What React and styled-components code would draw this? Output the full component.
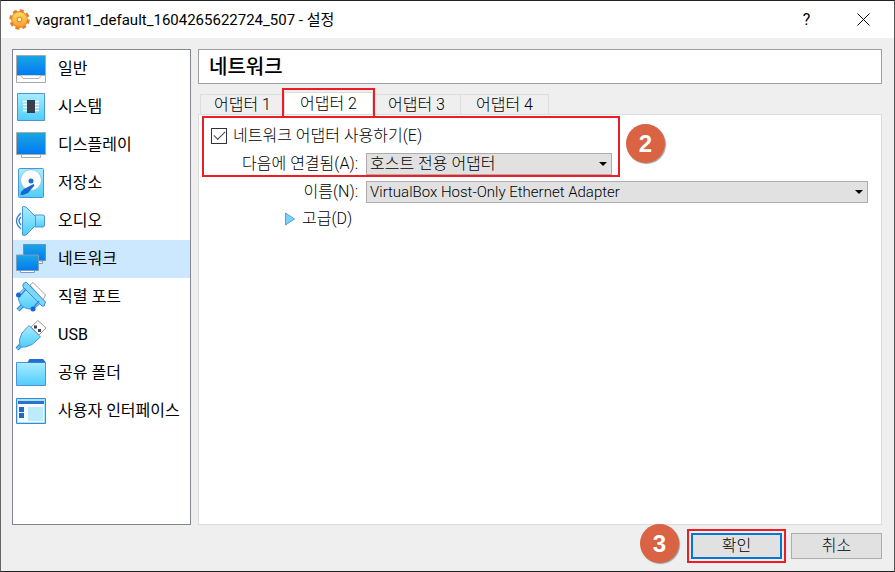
import React from "react";
import styled, { createGlobalStyle, css } from "styled-components";

const colors = {
	face: "#efefef",
	control: "#e1e1e1",
	line: "#dcdcdc",
	outline: "#adadad",
	mark: "#ee1c25",
	badge: "#d96343",
	focus: "#0078d7",
	selected: "#cce8ff",
};

const fonts = {
	system: `Roboto, "Noto Sans CJK KR", sans-serif`,
	form: `Roboto, "Noto Sans CJK KR", sans-serif`,
	badge: `"Liberation Sans", sans-serif`,
};

// --------------------------------------------------

const sections = [
	{ name: "일반", icon: "general", },
	{ name: "시스템", icon: "system", },
	{ name: "디스플레이", icon: "display", },
	{ name: "저장소", icon: "storage", },
	{ name: "오디오", icon: "audio", },
	{ name: "네트워크", icon: "network", },
	{ name: "직렬 포트", icon: "serial", },
	{ name: "USB", icon: "usb", },
	{ name: "공유 폴더", icon: "folder", },
	{ name: "사용자 인터페이스", icon: "ui", },
];

const adapters = [ "어댑터 1", "어댑터 2", "어댑터 3", "어댑터 4", ];

// --------------------------------------------------

const drawings = {
	general: (
		<>
			<path d="M1.5 20.5H30.5V29.5H1.5Z" fill="#fff" stroke="#a9a9a9" />
			<path d="M1.5 2.5H30.5V22.5H1.5Z" fill="url(#screen)" stroke="#a9a9a9" />
			<path d="M2 22.5H6L8 25.5H24L26 22.5H30" fill="#fff" stroke="#b5b5b5" />
		</>
	),
	system: (
		<>
			<path d="M2.5 2.5H29.5V29.5H2.5Z" fill="url(#glass)" stroke="#4b94dc" />
			<path
				d="M8 10.5H24M8 13.5H24M8 16.5H24M8 19.500H24"
				stroke="#fff"
				strokeWidth="1.500"
			/>
			<path d="M12 9H20V22H12Z" fill="#3b3f4c" />
		</>
	),
	display: (
		<>
			<path d="M6.5 24H25.5V28.5H6.5Z" fill="#fff" stroke="#a9a9a9" />
			<path d="M1.5 3.5H30.5V25.5H1.5Z" fill="url(#screen)" stroke="#a9a9a9" />
		</>
	),
	storage: (
		<>
			<rect
				x="3.5"
				y="1.5"
				width="25"
				height="29"
				rx="1"
				fill="url(#glass)"
				stroke="#4b94dc"
			/>
			<circle cx="16" cy="13" r="10.5" fill="#fff" stroke="#8fc8ef" />
			<circle cx="16" cy="14" r="2.5" fill="#1b6fd0" />
			<path d="M18.5 17L19.5 18.5L13 26L8 28H5.5L6 25L9 22Z" fill="#1668cf" />
		</>
	),
	audio: (
		<>
			<path
				d="M6 8Q-3 16 6 24M6 12Q2 16 6 20"
				fill="none"
				stroke="#2f7fd6"
				strokeWidth="1.3"
			/>
			<path
				d="M20 10H28Q29.500 10 29.500 12V20Q29.500 22 28 22H20Z"
				fill="url(#glass)"
				stroke="#4b94dc"
			/>
			<path
				d="M7.5 2Q7.5 1.5 9 1.5L11 2L20.5 11.5V20.5L11 30L9 30.5L7.5 30Z"
				fill="url(#glass)"
				stroke="#4b94dc"
			/>
		</>
	),
	network: (
		<>
			<path d="M8.5 1.5H30.5V17.5H8.5Z" fill="url(#screen)" stroke="#6a93bb" />
			<path d="M22 18H27.5V20.5H22" fill="#fff" stroke="#7c9cbc" />
			<path d="M5.5 27H19.5V29.5H5.5Z" fill="#fff" stroke="#7c9cbc" />
			<path d="M1.5 12H23.5V27.5H1.5Z" fill="url(#screen)" stroke="#7c9cbc" />
		</>
	),
	serial: (
		<>
			<path d="M15 4L18 1.5L30.5 14L28 19Z" fill="#fff" stroke="#a2a2a2" />
			<path d="M3 29L9 23" stroke="#2f7fd6" strokeWidth="4" />
			<path d="M3 29L9 23" stroke="#62cdf8" strokeWidth="2" />
			<path
				d="M11 5L4.5 12Q2 19 6 24Q12 30 20 27L28 20Z"
				fill="url(#glass)"
				stroke="#4b94dc"
			/>
			<path
				d="M8 3L11 1L30.5 21L29 25H27L8 6Z"
				fill="#7bd8fb"
				stroke="#3c88d8"
			/>
			<path d="M11 8L6 14M24 20L19 26" stroke="#3c88d8" strokeWidth="1.5" />
			<circle cx="3.5" cy="14" r="2.5" fill="#1668cf" />
			<circle cx="18" cy="28" r="2.5" fill="#1668cf" />
		</>
	),
	usb: (
		<>
			<path d="M16 8L23 1.5L31 9L24 16Z" fill="#fff" stroke="#999" />
			<path d="M19 6.5H22V9.5H19ZM23 10H26V13H23Z" fill="#444" />
			<path d="M2 30L6 26" stroke="#2f7fd6" strokeWidth="4" />
			<path d="M2 30L6 26" stroke="#62cdf8" strokeWidth="2" />
			<path
				d="M14 6.5L25.5 18L17 25.5Q11 29 5 28Q3 20 7 14Z"
				fill="url(#glass)"
				stroke="#4b94dc"
			/>
		</>
	),
	folder: (
		<>
			<path d="M12 6L14.5 2H28L30.5 5V8H12Z" fill="#1f6fd2" />
			<path d="M1.5 5.5H30.5V28.5H1.5Z" fill="url(#glass)" stroke="#4b94dc" />
			<path d="M13 5.5L15 2.5H28L30 5.5Z" fill="#1f6fd2" />
		</>
	),
	ui: (
		<>
			<path d="M1.5 3.5H30.5V28.5H1.5Z" fill="#a5e8fd" stroke="#3c88d8" />
			<path d="M3 9H29V27H3Z" fill="#f5fcff" />
			<path d="M3 6H29V9H3Z" fill="#2d73ce" />
			<path d="M4 12H9V17H4ZM4 18H9V23H4Z" fill="#1f68c8" />
			<path d="M13 12H28V26H13Z" fill="#bdebfb" />
		</>
	),
};

const Icon = ({ name, }) => (
	<IconSvg viewBox="0 0 32 32" aria-hidden="true">
		{drawings[name]}
	</IconSvg>
);

const Gradients = () => (
	<Defs aria-hidden="true">
		<defs>
			<linearGradient id="screen" x1="0" y1="0" x2="0" y2="1">
				<stop offset="0" stopColor="#1ba6e4" />
				<stop offset="1" stopColor="#007af2" />
			</linearGradient>
			<linearGradient id="glass" x1="0" y1="0" x2="0" y2="1">
				<stop offset="0" stopColor="#a9edff" />
				<stop offset="1" stopColor="#4fcdfb" />
			</linearGradient>
			<linearGradient id="gear" x1="0" y1="0" x2="0" y2="1">
				<stop offset="0" stopColor="#ffdf5c" />
				<stop offset="1" stopColor="#f79a2c" />
			</linearGradient>
		</defs>
	</Defs>
);

const Gear = () => (
	<GearSvg viewBox="0 0 20 20" aria-hidden="true">
		<circle
			cx="10"
			cy="10"
			r="8.5"
			fill="none"
			stroke="#e07f2a"
			strokeWidth="2.5"
			strokeDasharray="3.8 2.87"
		/>
		<circle cx="10" cy="10" r="7.5" fill="url(#gear)" stroke="#e58a2c" />
		<circle cx="10" cy="10" r="2.2" fill="#fff3d0" stroke="#e58a2c" />
	</GearSvg>
);

// --------------------------------------------------

const Combo = ({ id, options, width, size, }) => (
	<ComboWrapper $width={width}>
		<Select id={id} $size={size}>
			{options.map(option => <option key={option}>{option}</option>)}
		</Select>
		<Arrow viewBox="0 0 8 4" aria-hidden="true">
			<path d="M0 0H8L4 4Z" />
		</Arrow>
	</ComboWrapper>
);

export default class App extends React.Component {
	constructor(props) {
		super(props);
		this.state = {
			section: "network",
			tab: 1,
			enabled: true,
		};
	}

	render() {
		const { section, tab, enabled, } = this.state;

		return (
			<Dialog>
				<GlobalStyle />
				<Gradients />

				<TitleBar>
					<Gear />
					<Title>vagrant1_default_1604265622724_507 - 설정</Title>
					<TitleButton aria-label="도움말">?</TitleButton>
					<TitleButton aria-label="닫기">
						<CloseSvg viewBox="0 0 13 13" aria-hidden="true">
							<path d="M0.5 0.5L12.5 12.5M12.5 0.5L0.5 12.5" />
						</CloseSvg>
					</TitleButton>
				</TitleBar>

				<Body>
					<Sidebar>
						{sections.map(({ name, icon, }) => (
							<SectionButton
								key={icon}
								$active={section === icon}
								onClick={() => this.setState({ section: icon, })}
							>
								<Icon name={icon} />
								{name}
							</SectionButton>
						))}
					</Sidebar>

					<Content>
						<Heading>네트워크</Heading>

						<Tabs role="tablist">
							{adapters.map((name, i) => (
								<Tab
									key={name}
									role="tab"
									aria-selected={tab === i}
									$active={tab === i}
									onClick={() => this.setState({ tab: i, })}
								>
									{name}
								</Tab>
							))}
						</Tabs>

						<Panel role="tabpanel">
							<Marked>
								<CheckRow>
									<Checkbox
										type="checkbox"
										checked={enabled}
										onChange={() =>
											this.setState({
												enabled: !enabled,
											})}
									/>
									네트워크 어댑터 사용하기(E)
								</CheckRow>
								<Row>
									<Label htmlFor="attached">다음에 연결됨(A):</Label>
									<Combo
										id="attached"
										width="246px"
										size="16px"
										options={[ "호스트 전용 어댑터", ]}
									/>
								</Row>
								<StepTwo>2</StepTwo>
							</Marked>

							<Fields>
								<Row>
									<Label htmlFor="name">이름(N):</Label>
									<Combo
										id="name"
										width="100%"
										size="15px"
										options={[ "VirtualBox Host-Only Ethernet Adapter", ]}
									/>
								</Row>
								<Advanced>
									<Triangle viewBox="0 0 10 14" aria-hidden="true">
										<path d="M0.5 1L9.5 7L0.5 13Z" />
									</Triangle>
									고급(D)
								</Advanced>
							</Fields>
						</Panel>
					</Content>
				</Body>

				<Footer>
					<StepThree>3</StepThree>
					<MarkedButton>
						<Button $primary>확인</Button>
					</MarkedButton>
					<Button>취소</Button>
				</Footer>
			</Dialog>
		);
	}
}

// --------------------------------------------------

const GlobalStyle = createGlobalStyle`
	* {
		box-sizing: border-box;
	}

	body {
		margin: 0;
	}

	button,
	select,
	input {
		margin: 0;
		padding: 0;
		font: inherit;
		color: inherit;
	}
`;

const Dialog = styled.main`
	min-height: 100vh;
	display: flex;
	flex-direction: column;
	background: ${colors.face};
	border: 1px solid #222;
	border-left-color: #666;
	border-right-color: #555;
	color: #000;
	font-family: ${fonts.form};
	font-size: 16px;
	font-weight: 300;
	line-height: 20px;
`;

const Defs = styled.svg`
	position: absolute;
	width: 0;
	height: 0;
`;

const TitleBar = styled.header`
	height: 37px;
	display: flex;
	align-items: center;
	padding: 0 2px 0 8px;
	background: #fff;
	font-family: ${fonts.system};
	font-weight: 400;
`;

const GearSvg = styled.svg`
	width: 21px;
	height: 21px;
	margin-right: 5px;
	overflow: visible;
`;

const Title = styled.h1`
	flex: 1;
	margin: 0;
	font-size: 15px;
	font-weight: 400;
`;

const TitleButton = styled.button`
	width: 57px;
	height: 36px;
	display: flex;
	align-items: center;
	justify-content: center;
	border: 0;
	background: none;
`;

const CloseSvg = styled.svg`
	width: 13px;
	height: 13px;
	stroke: #000;
`;

const Body = styled.div`
	flex: 1;
	display: flex;
	gap: 7px;
	padding: 11px 12px 0 11px;
`;

const Sidebar = styled.nav`
	width: 179px;
	flex: none;
	display: flex;
	flex-direction: column;
	background: #fff;
	border: 1px solid #828790;
	font-family: ${fonts.system};
	font-weight: 400;
`;

const SectionButton = styled.button`
	height: 38px;
	display: flex;
	align-items: center;
	gap: 11px;
	padding-left: 2px;
	border: 0;
	background: ${({ $active, }) => ($active ? colors.selected : "none")};
	text-align: left;
	white-space: nowrap;
`;

const IconSvg = styled.svg`
	width: 32px;
	height: 32px;
	flex: none;
`;

const Content = styled.div`
	flex: 1;
	min-width: 0;
	display: flex;
	flex-direction: column;
`;

const Heading = styled.h2`
	height: 35px;
	margin: 0;
	padding: 0 10px;
	background: #fff;
	border: 1px solid #a0a0a0;
	font-size: 20px;
	font-weight: 500;
	line-height: 34px;
`;

const Tabs = styled.div`
	height: 30px;
	display: flex;
	align-items: flex-end;
	padding-left: 2px;
`;

const Tab = styled.button`
	width: 89px;
	height: 20px;
	margin-right: -1px;
	border: 1px solid ${colors.line};
	border-bottom: 0;
	background: ${colors.face};

	&:first-child {
		width: 85px;
	}

	${({ $active, }) =>
		$active &&
		css`
			position: relative;
			height: 22px;
			background: #fff;

			/* red frame laid over the tab */
			&::after {
				content: "";
				position: absolute;
				inset: -5px -3px -4px;
				border: 2px solid ${colors.mark};
			}
		`};
`;

const Panel = styled.section`
	flex: 1;
	padding: 1px 13px 0 3px;
	background: #fff;
	border: 1px solid ${colors.line};
`;

const Marked = styled.div`
	position: relative;
	width: 418px;
	height: 61px;
	padding: 7px 5px 0 7px;
	border: 2px solid ${colors.mark};
`;

const CheckRow = styled.label`
	display: flex;
	align-items: center;
	gap: 6px;
	height: 22px;
	margin-bottom: 6px;
`;

const Checkbox = styled.input`
	appearance: none;
	width: 16px;
	height: 16px;
	display: grid;
	place-items: center;
	border: 1px solid #333;
	background: #fff;

	&:checked::before {
		content: "";
		width: 10px;
		height: 5px;
		margin-bottom: 4px;
		border: solid #444;
		border-width: 0 0 1px 1px;
		transform: rotate(-45deg);
	}
`;

const Row = styled.div`
	display: flex;
	align-items: center;
	gap: 8px;
`;

const Label = styled.label`
	width: 147px;
	flex: none;
	text-align: right;
`;

const ComboWrapper = styled.div`
	position: relative;
	width: ${({ $width, }) => $width};
`;

const Select = styled.select`
	appearance: none;
	display: block;
	width: 100%;
	height: 22px;
	padding: 0 20px 0 3px;
	border: 1px solid ${colors.outline};
	border-radius: 0;
	background: ${colors.control};
	font-size: ${({ $size, }) => $size};
`;

const Arrow = styled.svg`
	position: absolute;
	top: 9px;
	right: 5px;
	width: 8px;
	height: 4px;
	pointer-events: none;
`;

const Fields = styled.div`
	display: flex;
	flex-direction: column;
	gap: 5px;
	padding: 4px 0 0 9px;
`;

const Advanced = styled.button`
	display: flex;
	align-items: center;
	gap: 7px;
	height: 22px;
	padding-left: 74px;
	border: 0;
	background: none;
`;

const Triangle = styled.svg`
	width: 10px;
	height: 14px;
	fill: #7ad2fb;
	stroke: #4ba3e8;
`;

const Step = styled.span`
	width: 39px;
	height: 39px;
	display: flex;
	align-items: center;
	justify-content: center;
	border-radius: 50%;
	background: ${colors.badge};
	box-shadow: 1px 1px 1px rgba(0, 0, 0, 0.35);
	color: #fff;
	font-family: ${fonts.badge};
	font-size: 24px;
	font-weight: 700;
`;

const StepTwo = styled(Step)`
	position: absolute;
	top: 6px;
	left: calc(100% + 8px);
`;

const StepThree = styled(Step)`
	margin: -5px 3px 0 0;
`;

const Footer = styled.footer`
	display: flex;
	align-items: center;
	justify-content: flex-end;
	gap: 5px;
	padding: 4px 12px 8px;
`;

const MarkedButton = styled.div`
	padding: 2px;
	border: 2px solid ${colors.mark};
`;

const Button = styled.button`
	width: 91px;
	height: 26px;
	display: block;
	border: ${({ $primary, }) =>
		$primary ? `2px solid ${colors.focus}` : `1px solid ${colors.outline}`};
	background: ${colors.control};
`;
